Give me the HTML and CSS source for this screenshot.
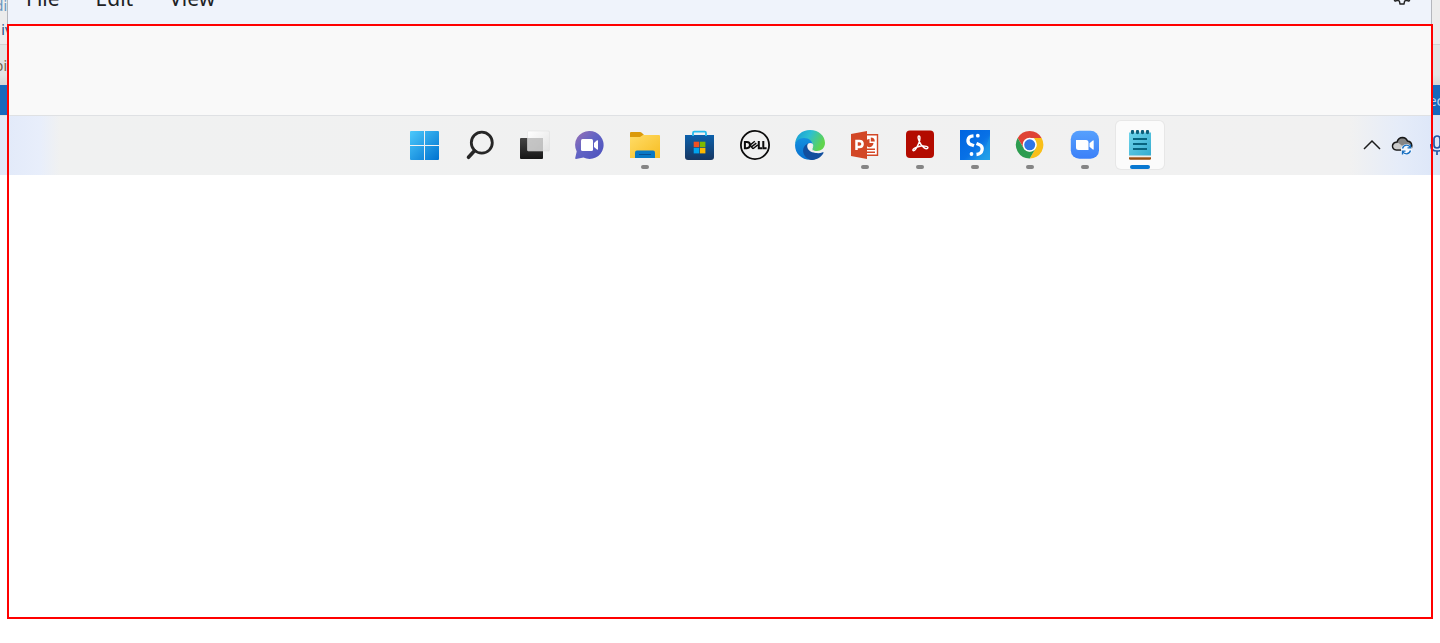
FILE: index.html
```html
<!DOCTYPE html>
<html lang="en">
<head>
<meta charset="utf-8">
<title>Notepad and taskbar</title>
<link rel="stylesheet" href="styles.css">
</head>
<body>
<main class="page">
  <div class="desktop">
    <div class="behind behind-left">
      <div class="behind-top"><span class="soft">di</span><span class="navy">iv</span></div>
      <div class="behind-mid"><span class="brown">pi</span></div>
      <div class="behind-bar"></div>
    </div>
    <section class="window">
      <header class="menubar">
        <nav class="menus">
          <button class="menu">File</button>
          <button class="menu">Edit</button>
          <button class="menu">View</button>
        </nav>
        <button class="gear" aria-label="Settings">
          <svg width="20" height="20" viewBox="0 0 20 20" fill="none" stroke="#222" stroke-width="1.400" stroke-linejoin="round"><path d="M8 2h4l.6 2.800 1.600.9 2.700-.9 2 3.400-2.200 1.800 2.200 1.800-2 3.400-2.700-.9-1.600.9L12 18H8l-.6-2.800-1.600-.9-2.700.9-2-3.400L3.300 10 1.100 8.200l2-3.400 2.700.9 1.600-.9z"/><circle cx="10" cy="10" r="3"/></svg>
        </button>
      </header>
      <div class="editor"></div>
    </section>
    <div class="behind behind-right">
      <div class="behind-top"></div>
      <div class="behind-mid"></div>
      <div class="behind-bar"><span>ec</span></div>
    </div>
  </div>

  <footer class="taskbar">
    <div class="apps">
      <button class="app" aria-label="Start">
        <svg viewBox="0 0 30 30"><defs><linearGradient id="st" x1="0" y1="1" x2="29" y2="30" gradientUnits="userSpaceOnUse"><stop stop-color="#4cc9fb"/><stop offset="1" stop-color="#0072d0"/></linearGradient></defs><path fill="url(#st)" d="M1 1h13v14H0V2q0-1 1-1zM15 1h13q1 0 1 1v13H15zM0 16h14v14H1q-1 0-1-1zM15 16h14v13q0 1-1 1H15z"/></svg>
      </button>
      <button class="app" aria-label="Search">
        <svg viewBox="0 0 30 30" fill="none" stroke="#262626"><circle cx="16.800" cy="12.700" r="10.500" stroke-width="2.800"/><path d="M9.500 20.800 3.500 27.300" stroke-width="3.600" stroke-linecap="round"/></svg>
      </button>
      <button class="app" aria-label="Task view">
        <svg viewBox="0 0 30 30"><defs><linearGradient id="tv" x2="0" y2="1"><stop stop-color="#444"/><stop offset="1" stop-color="#161616"/></linearGradient><linearGradient id="tw" x2="1" y2="1"><stop stop-color="#fff"/><stop offset="1" stop-color="#e2e2e2"/></linearGradient></defs><rect y="8" width="23" height="21" rx="1" fill="url(#tv)"/><rect x="7.500" y="1" width="22" height="20" rx="1" fill="url(#tw)" stroke="#ddd" stroke-width=".5"/><path d="M7.500 8H23v13H8.500q-1 0-1-1z" fill="#aaa" opacity=".65"/></svg>
      </button>
      <button class="app" aria-label="Chat">
        <svg viewBox="0 0 30 30"><defs><linearGradient id="ch" x2="1" y2="1"><stop stop-color="#9a70b5"/><stop offset=".45" stop-color="#6264c4"/><stop offset="1" stop-color="#4b50bd"/></linearGradient></defs><path fill="url(#ch)" d="M14.500 1a14 14 0 1 1-6 26.600L1 29q-1 0-.8-1l1.500-6.500A14 14 0 0 1 14.500 1z"/><rect x="6" y="9" width="12" height="12" rx="1.500" fill="#fff"/><path fill="#fff" d="m19 13 3-2.700q1-.5 1 .7v8q0 1-1 .5L19 17z"/></svg>
      </button>
      <button class="app running" aria-label="File Explorer">
        <svg viewBox="0 0 30 30"><defs><linearGradient id="fo" x2="1" y2="1"><stop stop-color="#ffdc67"/><stop offset="1" stop-color="#f7bd22"/></linearGradient></defs><path fill="#db9a0b" d="M1 2h9q1 0 2 1l2 2h15v8H0V3q0-1 1-1z"/><path fill="url(#fo)" d="M0 7h10l3-2h16q1 0 1 1v22H0z"/><path fill="#0878c5" d="M7 20.500h16q2 0 2 2V28H5v-5.500q0-2 2-2z"/><path fill="#084f93" d="M9 24h12v1H9z"/></svg>
      </button>
      <button class="app" aria-label="Microsoft Store">
        <svg viewBox="0 0 30 30"><defs><linearGradient id="ms" x2="0" y2="1"><stop stop-color="#0c61ac"/><stop offset="1" stop-color="#173762"/></linearGradient></defs><path fill="url(#ms)" d="M0 5h29v22q0 3-3 3H3q-3 0-3-3z"/><path d="M8 6V3q0-1.300 1.300-1.300h10.400Q21 1.700 21 3v3" fill="none" stroke="#26bdef" stroke-width="1.800"/><path fill="#f25022" d="M8.700 11.700h5.500v5.500H8.700z"/><path fill="#7fba00" d="M14.900 11.700h5.500v5.500h-5.500z"/><path fill="#00a4ef" d="M8.700 17.900h5.500v5.500H8.700z"/><path fill="#ffb900" d="M14.900 17.900h5.500v5.500h-5.500z"/></svg>
      </button>
      <button class="app" aria-label="Dell">
        <svg viewBox="0 0 30 30"><circle cx="15" cy="15" r="14.100" fill="none" stroke="#0c0c0c" stroke-width="1.800"/><g fill="none" stroke="#0c0c0c" stroke-width="2"><path d="M4.900 12h2a2.900 2.900 0 0 1 0 6.200h-2zM18.800 11v7.200h3.200M23.300 11v7.200h3.300"/><path d="m10 15.100 4.800-3.800M11.500 16.900l4.800-3.800M13 18.700l4.800-3.800M10 15l3 3.800" stroke-width="1.400"/></g></svg>
      </button>
      <button class="app" aria-label="Microsoft Edge">
        <svg viewBox="0 0 30 30"><defs><linearGradient id="e1" x1="0" x2="1" y2=".4"><stop stop-color="#1598d6"/><stop offset=".5" stop-color="#2dbfd2"/><stop offset="1" stop-color="#60d44e"/></linearGradient><linearGradient id="e2" x2="0" y2="1"><stop stop-color="#1490df"/><stop offset="1" stop-color="#0870cf"/></linearGradient></defs><path fill="url(#e1)" d="M0 14C1 5 7 0 15 0c9 0 15 6 15 13 0 5-4 8-8 8-4 0-5-1.500-4.500-2.500 1.500-2 1-7-3.500-8C8 9 2 11 0 14z"/><path fill="url(#e2)" d="M0 15c.5-4 4-7 9-7 5 0 9 3.500 9 7.500 0-2-3-3-5-1.500-5 4-1 13 7 15.200C9 32 0 25 0 15z"/><path fill="#124f9e" d="M12 14c-7 4-4 14 4 16 5 .3 10-2.500 12.500-7 .3-.7-.3-1-.8-.7-4 1.700-8 1-9.700-1.300-1.300-1.500-1.500-3-.5-4.500C17 13 14 12.500 12 14z"/><path fill="#f1f1f1" d="M12.300 15.200c.7-3 4.700-3 5.600-.2.400 2-.9 3-.9 4 .3 2 4 3.500 7.800 2.800-6.500 2.700-13.300-1.300-12.500-6.600z"/></svg>
      </button>
      <button class="app running" aria-label="PowerPoint">
        <svg viewBox="0 0 30 30"><path fill="#fff" stroke="#d24726" stroke-width="1.400" d="M16 4.700h11.500v20.600H16z"/><path fill="#d24726" d="M17 18.500h8V20h-8zM17 21.500h8V23h-8zM19.500 9v4h4a4 4 0 0 1-6.500 3.200V9.800Q18 9 19.500 9zM20.800 7.500a4 4 0 0 1 4 4h-4z"/><path fill="#d24726" d="M1 4 17 1v28L1 26z"/><path fill="none" stroke="#fff" stroke-width="2.500" d="M6.500 20v-9h2.800q3.300 0 3.300 3t-3.300 3H7"/></svg>
      </button>
      <button class="app running" aria-label="Adobe Acrobat">
        <svg viewBox="0 0 30 30"><rect x="1" y=".5" width="28" height="27.500" rx="4" fill="#b30b00"/><path d="M14 6c-2 0-.5 5 2 8.500 2 2.500 5 5 6.500 4 2-2-3-3-6.500-2.500-4 .5-9 3-8 4.500 1.500 1.500 4.500-4 6-8 1.200-3 1.300-6.500 0-6.500z" fill="none" stroke="#fff" stroke-width="1.400"/></svg>
      </button>
      <button class="app running" aria-label="Snap app">
        <svg viewBox="0 0 30 30"><defs><linearGradient id="sn" x2="1" y2="1"><stop stop-color="#0064e0"/><stop offset=".55" stop-color="#0871e6"/><stop offset="1" stop-color="#2faee9"/></linearGradient></defs><path fill="url(#sn)" d="M0 0h30v30H0z"/><path fill="#1b9ce8" opacity=".5" d="M30 5v25H14c8-3 12-12 16-25z"/><g fill="none" stroke="#fff" stroke-width="3.300"><path d="M13.500 5.800c-7 .5-7 7.500-2 9l2.500 1M16.500 13.500l2.500 1c5 2 4 9.300-2.500 10"/></g><g fill="#fff"><circle cx="17.800" cy="5.700" r="1.900"/><circle cx="11.500" cy="24" r="1.900"/></g></svg>
      </button>
      <button class="app running" aria-label="Google Chrome">
        <svg viewBox="0 0 30 30"><path fill="#df4335" d="M2.700 8A13.700 13.700 0 0 1 26.600 8H14.700l-6 10.300z"/><path fill="#f9bf19" d="M26.600 8A13.700 13.700 0 0 1 14.700 28.500l6-10.300Q23 13 19 8z"/><path fill="#2d9d50" d="M2.700 8A13.700 13.700 0 0 0 14.700 28.500l6-10.300q-5 6-11.500 1z"/><circle cx="14.700" cy="14.800" r="7" fill="#fff"/><circle cx="14.700" cy="14.800" r="5.500" fill="#2f75e5"/></svg>
      </button>
      <button class="app running" aria-label="Zoom">
        <svg viewBox="0 0 30 30"><defs><linearGradient id="zo" x2="0" y2="1"><stop stop-color="#56a0fd"/><stop offset="1" stop-color="#3c80f8"/></linearGradient></defs><rect x=".8" y=".8" width="28.200" height="28" rx="8.500" fill="url(#zo)"/><path fill="#fff" d="M6 10h10q2.500 0 2.500 2.500V20h-10Q6 20 6 17.500zM19.500 13.300l3.300-2.800q.9-.5.900.5v8q0 1-.9.5l-3.300-2.800z"/></svg>
      </button>
      <button class="app running active" aria-label="Notepad">
        <svg viewBox="0 0 30 30"><defs><linearGradient id="np" x2="1" y2="1"><stop stop-color="#6fd4ea"/><stop offset="1" stop-color="#35acd0"/></linearGradient></defs><path fill="#9a4f12" d="M4 26h22v2.500q0 1.300-1.300 1.300H5.300Q4 29.800 4 28.500z"/><path fill="#f3eee8" d="M4 25h22v2.300H4z"/><path fill="url(#np)" d="M4 2.500h22v23H4z"/><path stroke="#08647f" stroke-width="1.800" d="M8 9h14M8 14h14M8 19h14"/><g fill="#0d5f7c"><ellipse cx="7.500" cy="2" rx="1.700" ry="2.200"/><ellipse cx="12.500" cy="2" rx="1.700" ry="2.200"/><ellipse cx="17.500" cy="2" rx="1.700" ry="2.200"/><ellipse cx="22.500" cy="2" rx="1.700" ry="2.200"/></g></svg>
      </button>
    </div>
    <div class="tray">
      <button class="tray-item" aria-label="Show hidden icons"><svg width="20" height="20" viewBox="0 0 20 20"><path d="m2 14 8-8 8 8" fill="none" stroke="#1c1c1c" stroke-width="1.500"/></svg></button>
      <button class="tray-item" aria-label="OneDrive syncing">
        <svg width="22" height="20" viewBox="0 0 22 20"><path d="M5.500 15q-4-.5-4-4t4.500-4Q7.500 2.500 11.500 2.500q3.500.2 5 3.500 4 .5 4.300 4.500 0 4-4 4.500z" fill="#858585" stroke="#161616" stroke-width="1.500"/><path d="M2.300 11q1-3.300 5.200-3l8 6.300H5.500q-3-.3-3.200-3.300z" fill="#ccc"/><circle cx="15.500" cy="14.500" r="5.500" fill="#f4f8ff"/><path d="M11.500 13.500q1-3.300 4-3.300 2.500 0 4 2.300m0-3v3.300h-3M19.500 15.500q-1 3.300-4 3.300-2.500 0-4-2.300m0 3v-3.300h3" fill="none" stroke="#176fc1" stroke-width="1.300"/></svg>
      </button>
      <button class="tray-item mic" aria-label="Microphone"><svg width="14" height="20" viewBox="0 0 14 20" fill="none" stroke="#2458a4" stroke-width="1.700"><rect x="4" y="1" width="6" height="12" rx="3"/><path d="M1 9v2q0 5 6 5t6-5V9M7 16v4"/></svg></button>
    </div>
  </footer>
  <div class="selection"></div>
</main>
</body>
</html>
```

FILE: styles.css
```css
* { box-sizing: border-box; }

body {
  margin: 0;
  background: #fff;
  font-family: "Noto Sans", "Open Sans", sans-serif;
}

button {
  padding: 0;
  border: 0;
  background: none;
  color: inherit;
  font: inherit;
}

svg { display: block; }

.page {
  position: relative;
  min-height: 100vh;
  overflow: hidden;
}

.desktop {
  display: grid;
  grid-template-columns: 7px 1fr 8px;
}

.behind {
  display: grid;
  grid-template-rows: 44px 41px 30px;
  overflow: hidden;
  font-size: 14px;
  line-height: 24px;
}

.behind > div {
  display: flex;
  flex-direction: column;
  justify-content: flex-end;
  overflow: hidden;
}

.behind-left > div { align-items: flex-end; }

.behind-top { background: #ececec; }

.behind-left .behind-top { padding-bottom: 2px; }

.behind-mid {
  padding-bottom: 7px;
  border-top: 1px solid #d2d2d2;
  background: linear-gradient(#e2e4e3 75%, #d4d6d6);
}

.behind-bar {
  padding-bottom: 2px;
  background: #1668bd;
  color: #b9d5f2;
}

.behind-right .behind-bar { align-items: center; }

.soft { color: #6793bd; }
.navy { color: #234f83; margin-right: -5px; }
.brown { color: #756149; }

.window {
  border: solid #b4b6bc;
  border-width: 0 1px;
}

.menubar {
  display: flex;
  justify-content: space-between;
  height: 24px;
  padding: 0 19px 0 18px;
  background: #eff3fb;
  overflow: hidden;
}

.menus {
  display: flex;
  gap: 36px;
  margin-top: -16px;
}

.menu {
  height: 28px;
  color: #202124;
  font-size: 21px;
  line-height: 28px;
}

.gear {
  height: 20px;
  margin-top: -14px;
}

.editor {
  height: 91px;
  background: #f9f9f9;
}

.taskbar {
  display: grid;
  grid-template-columns: 1fr auto 1fr;
  align-items: center;
  height: 60px;
  padding: 0 0 1px 125px;
  border-top: 1px solid #dfe1e4;
  background: linear-gradient(90deg, #e1e9f9 0, #e8eefb 40px, #f0f1f1 60px, #f1f1f1 calc(100% - 90px), #e5ecf9 calc(100% - 40px), #dce6f8 100%);
  overflow: hidden;
}

.apps {
  display: flex;
  grid-column: 2;
  gap: 7px;
}

.app {
  position: relative;
  display: grid;
  place-items: center;
  width: 48px;
  height: 48px;
  border-radius: 5px;
}

.app svg {
  width: 30px;
  height: 30px;
}

.running::after {
  content: "";
  position: absolute;
  bottom: 0;
  left: 50%;
  width: 8px;
  height: 4px;
  border-radius: 2px;
  background: #858585;
  transform: translateX(-50%);
}

.active {
  background: #fbfbfb;
  box-shadow: 0 0 0 1px #e7e7e7;
}

.active::after {
  width: 20px;
  background: #0878d1;
}

.tray {
  display: flex;
  align-items: center;
  justify-self: end;
  gap: 9px;
  margin-right: -4px;
}

.mic { margin-left: 8px; }

.selection {
  position: absolute;
  inset: 24px 7px;
  border: 2px solid #f00;
  pointer-events: none;
}
```
